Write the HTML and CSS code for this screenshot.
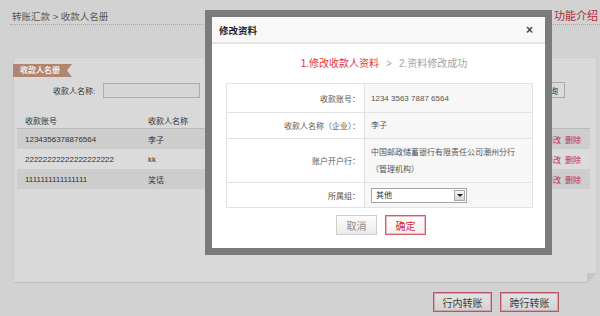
FILE: index.html
```html
<!DOCTYPE html>
<html lang="zh-CN">
<head>
<meta charset="utf-8">
<title>收款人名册</title>
<link rel="stylesheet" href="styles.css">
</head>
<body>
<div class="topbar">
  <div class="crumb">转账汇款 &gt; 收款人名册</div>
  <a class="help">功能介绍</a>
</div>
<div class="panel">
  <div class="ribbon">收款人名册</div>
  <div class="search">
    <span class="search-label">收款人名称:</span>
    <span class="input"></span>
    <span class="query">查询</span>
  </div>
  <div class="list">
    <div class="row head"><span class="c1">收款账号</span><span class="c2">收款人名称</span></div>
    <div class="row odd"><span class="c1">1234356378876564</span><span class="c2">李子</span><span class="ops"><a>修改</a><a>删除</a></span></div>
    <div class="row even"><span class="c1">22222222222222222222</span><span class="c2">kk</span><span class="ops"><a>修改</a><a>删除</a></span></div>
    <div class="row odd"><span class="c1">1111111111111111</span><span class="c2">笑话</span><span class="ops"><a>修改</a><a>删除</a></span></div>
  </div>
</div>
<div class="actions">
  <span class="btn-red">行内转账</span>
  <span class="btn-red">跨行转账</span>
</div>

<div class="modal">
  <div class="m-head">
    <span class="m-title">修改资料</span>
    <span class="m-close">×</span>
  </div>
  <div class="steps"><span class="step-on">1.修改收款人资料</span><span class="sep">&gt;</span><span class="step-off">2.资料修改成功</span></div>
  <table class="form">
    <tr class="r1"><td class="lbl">收款账号：</td><td class="val">1234 3563 7887 6564</td></tr>
    <tr class="r2"><td class="lbl">收款人名称（企业）：</td><td class="val">李子</td></tr>
    <tr class="r3"><td class="lbl">账户开户行：</td><td class="val">中国邮政储蓄银行有限责任公司潮州分行<br>（管理机构）</td></tr>
    <tr class="r4"><td class="lbl">所属组：</td><td class="val"><div class="select"><span class="sel-text">其他</span><span class="arrow"><i></i></span></div></td></tr>
  </table>
  <div class="m-btns">
    <span class="btn btn-cancel">取消</span>
    <span class="btn btn-ok">确定</span>
  </div>
</div>
</body>
</html>
```

FILE: styles.css
```css
html, body {
  margin: 0;
  padding: 0;
}
body {
  width: 600px;
  height: 316px;
  overflow: hidden;
  position: relative;
  background: #d2d2d2;
  font-family: "Liberation Sans", "Noto Sans CJK SC", sans-serif;
  font-size: 8px;
  color: #444;
}

.topbar {
  display: flex;
  justify-content: space-between;
  align-items: center;
  height: 15px;
  padding: 9px 0 0 2px;
  margin-left: 10px;
  border-bottom: 1px dotted #a6a6a6;
}
.crumb {
  font-size: 9.5px;
  line-height: 15px;
  color: #585858;
}
.help {
  font-size: 11px;
  line-height: 15px;
  color: #b12a37;
  margin-right: 2px;
}

.panel {
  margin: 32px 3px 0 13px;
  height: 226px;
  box-sizing: border-box;
  background: #d9d9d9;
  border: 1px solid #cccccc;
  border-bottom-color: #bdbdbd;
  position: relative;
}
.panel::after {
  content: "";
  position: absolute;
  right: -1px;
  bottom: -1px;
  width: 0;
  height: 0;
  border-style: solid;
  border-width: 0 0 10px 10px;
  border-color: transparent transparent #d2d2d2 #c6c6c6;
}

.ribbon {
  margin: 6px 0 0 -1px;
  width: 59px;
  height: 13px;
  box-sizing: border-box;
  padding-left: 7px;
  background: #b3856e;
  color: #f6eee9;
  font-weight: bold;
  font-size: 8px;
  line-height: 13px;
  clip-path: polygon(0 0, 100% 0, calc(100% - 5px) 50%, 100% 100%, 0 100%);
}

.search {
  display: flex;
  align-items: center;
  height: 16px;
  margin-top: 5px;
  padding-left: 39px;
}
.search-label {
  color: #333;
}
.input {
  width: 97px;
  height: 15px;
  box-sizing: border-box;
  margin-left: 8px;
  border: 1px solid #adadad;
  background: #d6d6d6;
}
.query {
  margin-left: auto;
  margin-right: 31px;
  width: 30px;
  height: 16px;
  box-sizing: border-box;
  border: 1px solid #a9a9a9;
  background: #dadada;
  display: flex;
  align-items: center;
  justify-content: center;
  color: #333;
}

.list {
  margin: 15px 6px 0 3px;
}
.row {
  display: flex;
  align-items: center;
  height: 20px;
  color: #333;
}
.row.head {
  height: 15px;
  border-bottom: 1px solid #bababa;
}
.c1 {
  width: 123px;
  padding-left: 8px;
}
.ops {
  margin-left: auto;
  padding-right: 9px;
  color: #c0303d;
}
.ops a + a {
  margin-left: 4px;
}
.odd {
  background: #cdcdcd;
}
.even {
  background: #dbdbdb;
}

.actions {
  display: flex;
  justify-content: flex-end;
  gap: 8px;
  margin: 9px 41px 0 0;
}
.btn-red {
  width: 59px;
  height: 20px;
  box-sizing: border-box;
  border: 1px solid #b9576a;
  box-shadow: inset 0 0 0 1px #d6a2a9;
  background: linear-gradient(#e3e3e3, #d3d3d3);
  display: flex;
  align-items: center;
  justify-content: center;
  font-size: 10px;
  color: #3c3c3c;
}

.modal {
  position: absolute;
  left: 205px;
  top: 10px;
  width: 347px;
  height: 245px;
  box-sizing: border-box;
  border: 7px solid #7b7b7b;
  background: #fff;
}
.m-head {
  height: 25px;
  background: #f8f8f8;
  border-bottom: 2px solid #e4e4e4;
  display: flex;
  align-items: center;
  justify-content: space-between;
  padding: 0 12px 0 7px;
}
.m-title {
  font-size: 9.5px;
  font-weight: bold;
  color: #222;
}
.m-close {
  font-size: 12px;
  font-weight: bold;
  color: #444;
}
.steps {
  margin-top: 13px;
  padding-left: 11px;
  text-align: center;
  font-size: 10px;
  line-height: 14px;
}
.step-on {
  color: #e4303d;
}
.sep {
  color: #a8a8a8;
  margin: 0 7px;
}
.step-off {
  color: #a2a2a2;
}

.form {
  margin: 12px 12px 0 14px;
  width: 307px;
  border-collapse: collapse;
}
.form td {
  border: 1px solid #e2e2e2;
  padding: 0;
  color: #555;
  font-size: 8px;
}
.form .lbl {
  width: 133px;
  text-align: right;
  padding-right: 4px;
  background: #fff;
}
.form .val {
  padding-left: 6px;
  background: #f7f7f7;
  line-height: 17px;
}
.r1 { height: 29px; }
.r2 { height: 26px; }
.r3 { height: 44px; }
.r4 { height: 25px; }

.select {
  display: flex;
  align-items: center;
  width: 96px;
  height: 15px;
  box-sizing: border-box;
  border: 1px solid #a5a5a5;
  background: #fff;
}
.sel-text {
  flex: 1;
  padding-left: 4px;
  line-height: 13px;
  color: #333;
}
.arrow {
  width: 11px;
  height: 11px;
  margin-right: 1px;
  box-sizing: border-box;
  border: 1px solid #a8a8a8;
  background: linear-gradient(#f6f6f6, #d6d6d6);
  display: flex;
  align-items: center;
  justify-content: center;
}
.arrow i {
  width: 0;
  height: 0;
  border-left: 3px solid transparent;
  border-right: 3px solid transparent;
  border-top: 3px solid #222;
}

.m-btns {
  display: flex;
  justify-content: center;
  gap: 8px;
  margin-top: 7px;
  padding-left: 5px;
}
.btn {
  width: 41px;
  height: 20px;
  box-sizing: border-box;
  display: flex;
  align-items: center;
  justify-content: center;
  font-size: 10px;
}
.btn-cancel {
  border: 1px solid #cdcdcd;
  background: linear-gradient(#fdfdfd, #ebebeb);
  color: #8a8a8a;
}
.btn-ok {
  border: 1px solid #d35d6b;
  box-shadow: inset 0 0 0 1px #f0b8be;
  background: linear-gradient(#ffffff, #f1f1f1);
  color: #d61f2e;
}
```
